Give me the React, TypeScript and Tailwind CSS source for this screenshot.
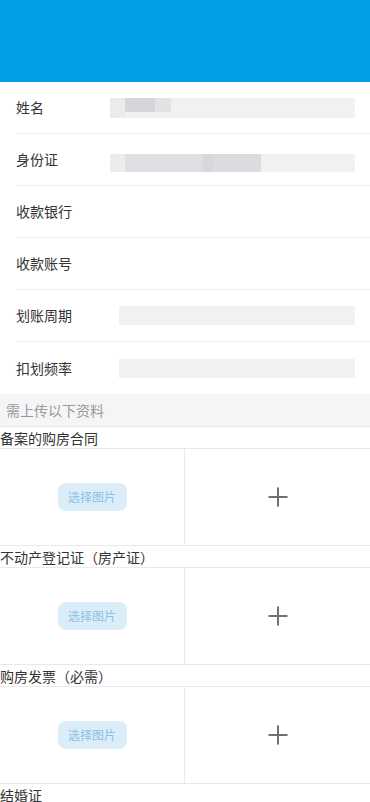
import { Plus } from 'lucide-react'

const font = { fontFamily: '"Noto Sans CJK SC", "Noto Sans", sans-serif' }

const fields = [
  { label: '姓名', kind: 'blurName' },
  { label: '身份证', kind: 'blurId' },
  { label: '收款银行', kind: 'none' },
  { label: '收款账号', kind: 'none' },
  { label: '划账周期', kind: 'box' },
  { label: '扣划频率', kind: 'box' },
]

const uploads = ['备案的购房合同', '不动产登记证（房产证）', '购房发票（必需）', '结婚证']

function FieldValue({ kind }: { kind: string }) {
  if (kind === 'blurName') {
    return (
      <div className="ml-[42px] h-[20px] w-[245px] bg-[#f1f1f4] flex">
        <div className="w-[15px] bg-[#ebebee]" />
        <div className="w-[30px] h-[14px] bg-[#d6d6da]" />
        <div className="w-[16px] h-[14px] bg-[#e2e2e5]" />
      </div>
    )
  }
  if (kind === 'blurId') {
    return (
      <div className="ml-[42px] mt-[6px] h-[18px] w-[245px] bg-[#f1f1f4] flex">
        <div className="w-[15px] bg-[#ececef]" />
        <div className="w-[78px] bg-[#dfdfe3]" />
        <div className="w-[10px] bg-[#d8d8dc]" />
        <div className="w-[48px] bg-[#dcdce0]" />
      </div>
    )
  }
  if (kind === 'box') {
    return <div className="ml-[51px] h-[19px] w-[236px] bg-[#f1f1f4]" />
  }
  return null
}

function UploadBlock({ title }: { title: string }) {
  return (
    <div>
      <div className="h-[22px] flex items-center text-[14px] text-[#333] leading-none border-b border-[#e9e9ec]">
        {title}
      </div>
      <div className="grid grid-cols-2 h-[97px] border-b border-[#e9e9ec]">
        <div className="flex items-center justify-center border-r border-[#e9e9ec]">
          <div className="w-[69px] h-[28px] rounded-[8px] bg-[#dbedf9] text-[#8ec0e4] text-[12px] flex items-center justify-center">
            选择图片
          </div>
        </div>
        <div className="flex items-center justify-center">
          <Plus size={30} strokeWidth={1.6} className="text-[#707070]" />
        </div>
      </div>
    </div>
  )
}

export default function App() {
  return (
    <div className="w-[370px] h-[802px] overflow-hidden bg-white" style={font}>
      <div className="h-[82px] bg-[#03a0e6]" />
      <div className="pl-[16px]">
        {fields.map((f, i) => (
          <div
            key={f.label}
            className={`h-[52px] flex items-center ${i < fields.length - 1 ? 'border-b border-[#efeff2]' : ''}`}
          >
            <span className="w-[52px] text-[14px] text-[#333] whitespace-nowrap">{f.label}</span>
            <FieldValue kind={f.kind} />
          </div>
        ))}
      </div>
      <div className="h-[33px] bg-[#f5f5f7] flex items-center pl-[6px] text-[14px] text-[#9a9a9a] border-b border-[#e9e9ec]">
        需上传以下资料
      </div>
      {uploads.map(t => (
        <UploadBlock key={t} title={t} />
      ))}
    </div>
  )
}
